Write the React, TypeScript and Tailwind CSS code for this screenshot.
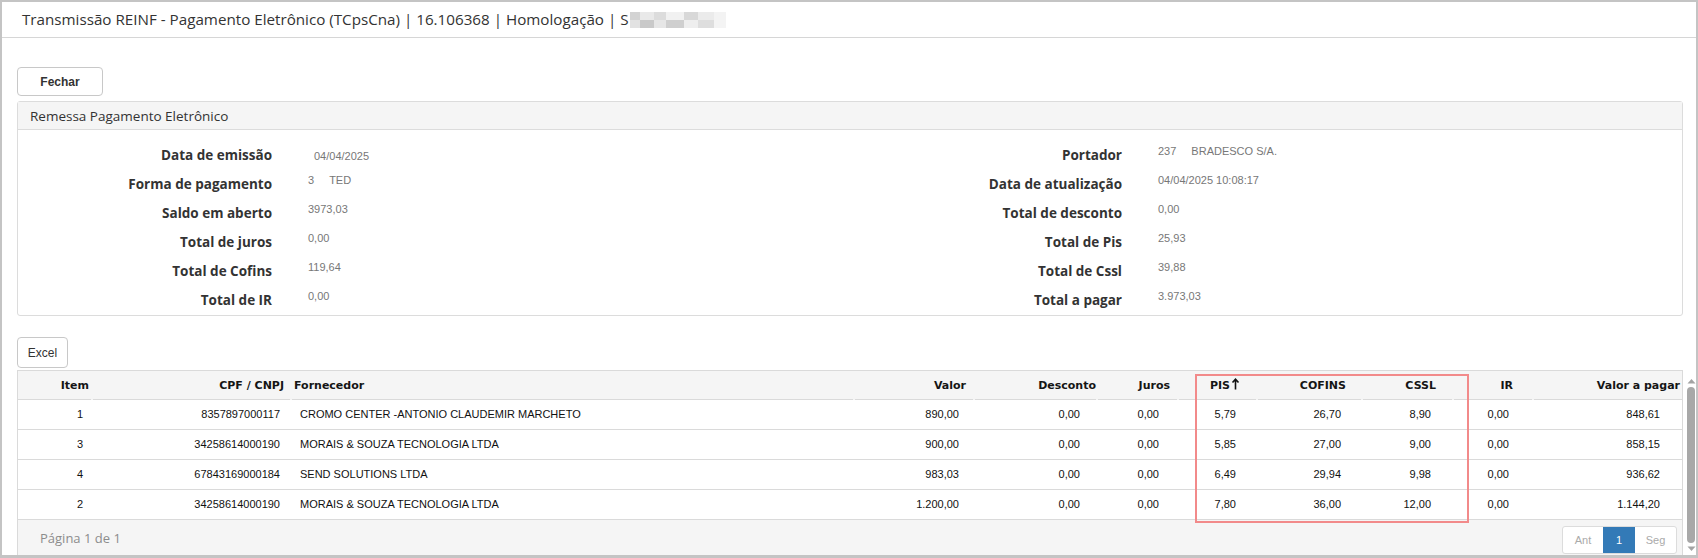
import React from "react";

type Row = {
  item: string;
  doc: string;
  fornecedor: string;
  valor: string;
  desconto: string;
  juros: string;
  pis: string;
  cofins: string;
  cssl: string;
  ir: string;
  pagar: string;
};

const rows: Row[] = [
  { item: "1", doc: "8357897000117", fornecedor: "CROMO CENTER -ANTONIO CLAUDEMIR MARCHETO", valor: "890,00", desconto: "0,00", juros: "0,00", pis: "5,79", cofins: "26,70", cssl: "8,90", ir: "0,00", pagar: "848,61" },
  { item: "3", doc: "34258614000190", fornecedor: "MORAIS & SOUZA TECNOLOGIA LTDA", valor: "900,00", desconto: "0,00", juros: "0,00", pis: "5,85", cofins: "27,00", cssl: "9,00", ir: "0,00", pagar: "858,15" },
  { item: "4", doc: "67843169000184", fornecedor: "SEND SOLUTIONS LTDA", valor: "983,03", desconto: "0,00", juros: "0,00", pis: "6,49", cofins: "29,94", cssl: "9,98", ir: "0,00", pagar: "936,62" },
  { item: "2", doc: "34258614000190", fornecedor: "MORAIS & SOUZA TECNOLOGIA LTDA", valor: "1.200,00", desconto: "0,00", juros: "0,00", pis: "7,80", cofins: "36,00", cssl: "12,00", ir: "0,00", pagar: "1.144,20" },
];

const cols =
  "grid grid-cols-[73px_197px_561px_118px_121px_79px_77px_103px_89px_78px_1fr]";

function Field({ label, children, wide }: { label: string; children: React.ReactNode; wide?: boolean }) {
  return (
    <div className="flex h-[29px]">
      <div
        className={
          (wide ? "w-[271px]" : "w-[254px]") +
          " shrink-0 text-right leading-[29px] font-['Open_Sans',sans-serif] font-bold text-[13.5px] text-[#333]"
        }
      >
        {label}
      </div>
      <div className="pl-[36px] pt-[3px] font-['Liberation_Sans',Arial,sans-serif] text-[11px] text-[#777] leading-[14px]">
        {children}
      </div>
    </div>
  );
}

function Code({ code, name }: { code: string; name: string }) {
  return (
    <span className="flex gap-[15px]">
      <span>{code}</span>
      <span>{name}</span>
    </span>
  );
}

function Th({ children, className }: { children: React.ReactNode; className: string }) {
  return <div className={"h-[29px] leading-[29px] border-b border-[#dadada] " + className}>{children}</div>;
}

function Td({ children, className }: { children: React.ReactNode; className: string }) {
  return <div className={"leading-[29px] " + className}>{children}</div>;
}

function Scrollbar() {
  return (
    <div className="w-[13px] shrink-0 flex flex-col items-center pl-[3px] pt-[8px]">
      <svg width="9" height="6" viewBox="0 0 9 6">
        <path d="M0.5 5.5 L4.5 1 L8.5 5.5 Z" fill="#a3a3a3" />
      </svg>
      <div className="mt-[3px] w-[8px] h-[156px] rounded-full bg-[#a8a8a8]" />
      <svg className="mt-[3px]" width="9" height="6" viewBox="0 0 9 6">
        <path d="M0.5 0.5 L4.5 5 L8.5 0.5 Z" fill="#a3a3a3" />
      </svg>
    </div>
  );
}

export default function App() {
  return (
    <div className="w-[1698px] h-[558px] overflow-hidden bg-white border-t-2 border-r-2 border-b-[3px] border-l-2 border-[#c4c4c4] flex flex-col">
      <div className="h-[36px] shrink-0 border-b border-[#d6d6d6] flex items-center pl-[20px] font-['Open_Sans',sans-serif] text-[15.2px] text-[#333]">
        <span>Transmissão REINF - Pagamento Eletrônico (TCpsCna) | 16.106368 | Homologação | S</span>
        <span className="ml-[1px] grid grid-cols-[10px_14px_12px_18px_14px_16px_12px] grid-rows-[8px_8px] w-[96px] h-[16px]">
          <span className="bg-[#d3d3d3]" />
          <span className="bg-[#e9e9e9]" />
          <span className="bg-[#dcdcdc]" />
          <span className="bg-[#f1f1f1]" />
          <span className="bg-[#d8d8d8]" />
          <span className="bg-[#ebebeb]" />
          <span className="bg-[#f3f3f3]" />
          <span className="bg-[#e2e2e2]" />
          <span className="bg-[#c9c9c9]" />
          <span className="bg-[#e6e6e6]" />
          <span className="bg-[#cfcfcf]" />
          <span className="bg-[#eeeeee]" />
          <span className="bg-[#dedede]" />
          <span className="bg-[#f4f4f4]" />
        </span>
      </div>

      <div className="flex flex-col pl-[15px] pr-[13px] pt-[29px]">
        <div>
          <button className="h-[29px] w-[86px] rounded-[4px] border border-[#c8c8c8] bg-white font-['Liberation_Sans',Arial,sans-serif] font-bold text-[12px] text-[#333]">
            Fechar
          </button>
        </div>

        <div className="mt-[5px] rounded-[3px] border border-[#dcdcdc]">
          <div className="h-[28px] bg-[#f5f5f5] border-b border-[#dcdcdc] flex items-center pl-[12px] pt-[2px] font-['Open_Sans',sans-serif] text-[13.5px] text-[#333]">
            Remessa Pagamento Eletrônico
          </div>
          <div className="grid grid-cols-[833px_1fr] pt-[11px]">
            <div className="flex flex-col">
              <Field label="Data de emissão">
                <span className="block pl-[6px] pt-[5px]">04/04/2025</span>
              </Field>
              <Field label="Forma de pagamento">
                <Code code="3" name="TED" />
              </Field>
              <Field label="Saldo em aberto">3973,03</Field>
              <Field label="Total de juros">0,00</Field>
              <Field label="Total de Cofins">119,64</Field>
              <Field label="Total de IR">0,00</Field>
            </div>
            <div className="flex flex-col">
              <Field wide label="Portador">
                <Code code="237" name="BRADESCO S/A." />
              </Field>
              <Field wide label="Data de atualização">04/04/2025 10:08:17</Field>
              <Field wide label="Total de desconto">0,00</Field>
              <Field wide label="Total de Pis">25,93</Field>
              <Field wide label="Total de Cssl">39,88</Field>
              <Field wide label="Total a pagar">3.973,03</Field>
            </div>
          </div>
        </div>

        <div className="mt-[21px]">
          <button className="h-[31px] w-[51px] rounded-[4px] border border-[#c8c8c8] bg-white font-['Liberation_Sans',Arial,sans-serif] text-[12px] text-[#333]">
            Excel
          </button>
        </div>

        <div className="mt-[2px] flex mr-[-13px]">
          <div className="relative flex-1 border-x border-t border-[#dadada]">
            <div className={cols + " bg-[#f5f5f5] gap-x-[2px] font-['DejaVu_Sans',Verdana,sans-serif] font-bold text-[11px] text-[#151515]"}>
              <Th className="text-right pr-[2px]">Item</Th>
              <Th className="text-right pr-[6px]">CPF / CNPJ</Th>
              <Th className="text-left pl-[2px]">Fornecedor</Th>
              <Th className="text-right pr-[7px]">Valor</Th>
              <Th className="text-right pr-0">Desconto</Th>
              <Th className="text-right pr-[7px]">Juros</Th>
              <Th className="text-right pr-[26px]">
                <span className="relative">
                  PIS
                  <svg className="absolute left-full top-[-1px] ml-[1px]" width="9" height="12" viewBox="0 0 9 12">
                    <path d="M4.5 11.5 V1.5 M1.5 4.5 L4.5 1.2 L7.5 4.5" stroke="#111" strokeWidth="1.6" fill="none" />
                  </svg>
                </span>
              </Th>
              <Th className="text-right pr-[15px]">COFINS</Th>
              <Th className="text-right pr-[16px]">CSSL</Th>
              <Th className="text-right pr-[19px]">IR</Th>
              <Th className="text-right pr-[2px]">Valor a pagar</Th>
            </div>
            <div className="font-['Liberation_Sans',Arial,sans-serif] text-[11px] text-[#111]">
              {rows.map((r, i) => (
                <div key={i} className={cols + " h-[30px] border-b border-[#dadada]"}>
                  <Td className="text-right pr-[8px]">{r.item}</Td>
                  <Td className="text-right pr-[8px]">{r.doc}</Td>
                  <Td className="text-left pl-[12px]">{r.fornecedor}</Td>
                  <Td className="text-right pr-[8px]">{r.valor}</Td>
                  <Td className="text-right pr-[8px]">{r.desconto}</Td>
                  <Td className="text-right pr-[8px]">{r.juros}</Td>
                  <Td className="text-right pr-[8px]">{r.pis}</Td>
                  <Td className="text-right pr-[6px]">{r.cofins}</Td>
                  <Td className="text-right pr-[5px]">{r.cssl}</Td>
                  <Td className="text-right pr-[5px]">{r.ir}</Td>
                  <Td className="text-right pr-[22px]">{r.pagar}</Td>
                </div>
              ))}
            </div>
            <div className="h-[40px] bg-[#f5f5f5] flex items-start justify-between pt-[6px] pl-[22px] pr-[5px]">
              <span className="leading-[24px] font-['Open_Sans',sans-serif] text-[13px] text-[#8c8c8c]">Página 1 de 1</span>
              <div className="flex h-[28px] rounded-[3px] border border-[#dcdcdc] bg-white font-['Liberation_Sans',Arial,sans-serif] text-[11px] overflow-hidden">
                <span className="w-[40px] flex items-center justify-center text-[#aaa]">Ant</span>
                <span className="w-[32px] flex items-center justify-center bg-[#337ab7] text-white">1</span>
                <span className="w-[41px] flex items-center justify-center text-[#aaa]">Seg</span>
              </div>
            </div>
            <div className="absolute left-[1177px] top-[3px] w-[274px] h-[149px] border-2 border-[#f28a8a] pointer-events-none" />
          </div>
          <Scrollbar />
        </div>
      </div>
    </div>
  );
}
